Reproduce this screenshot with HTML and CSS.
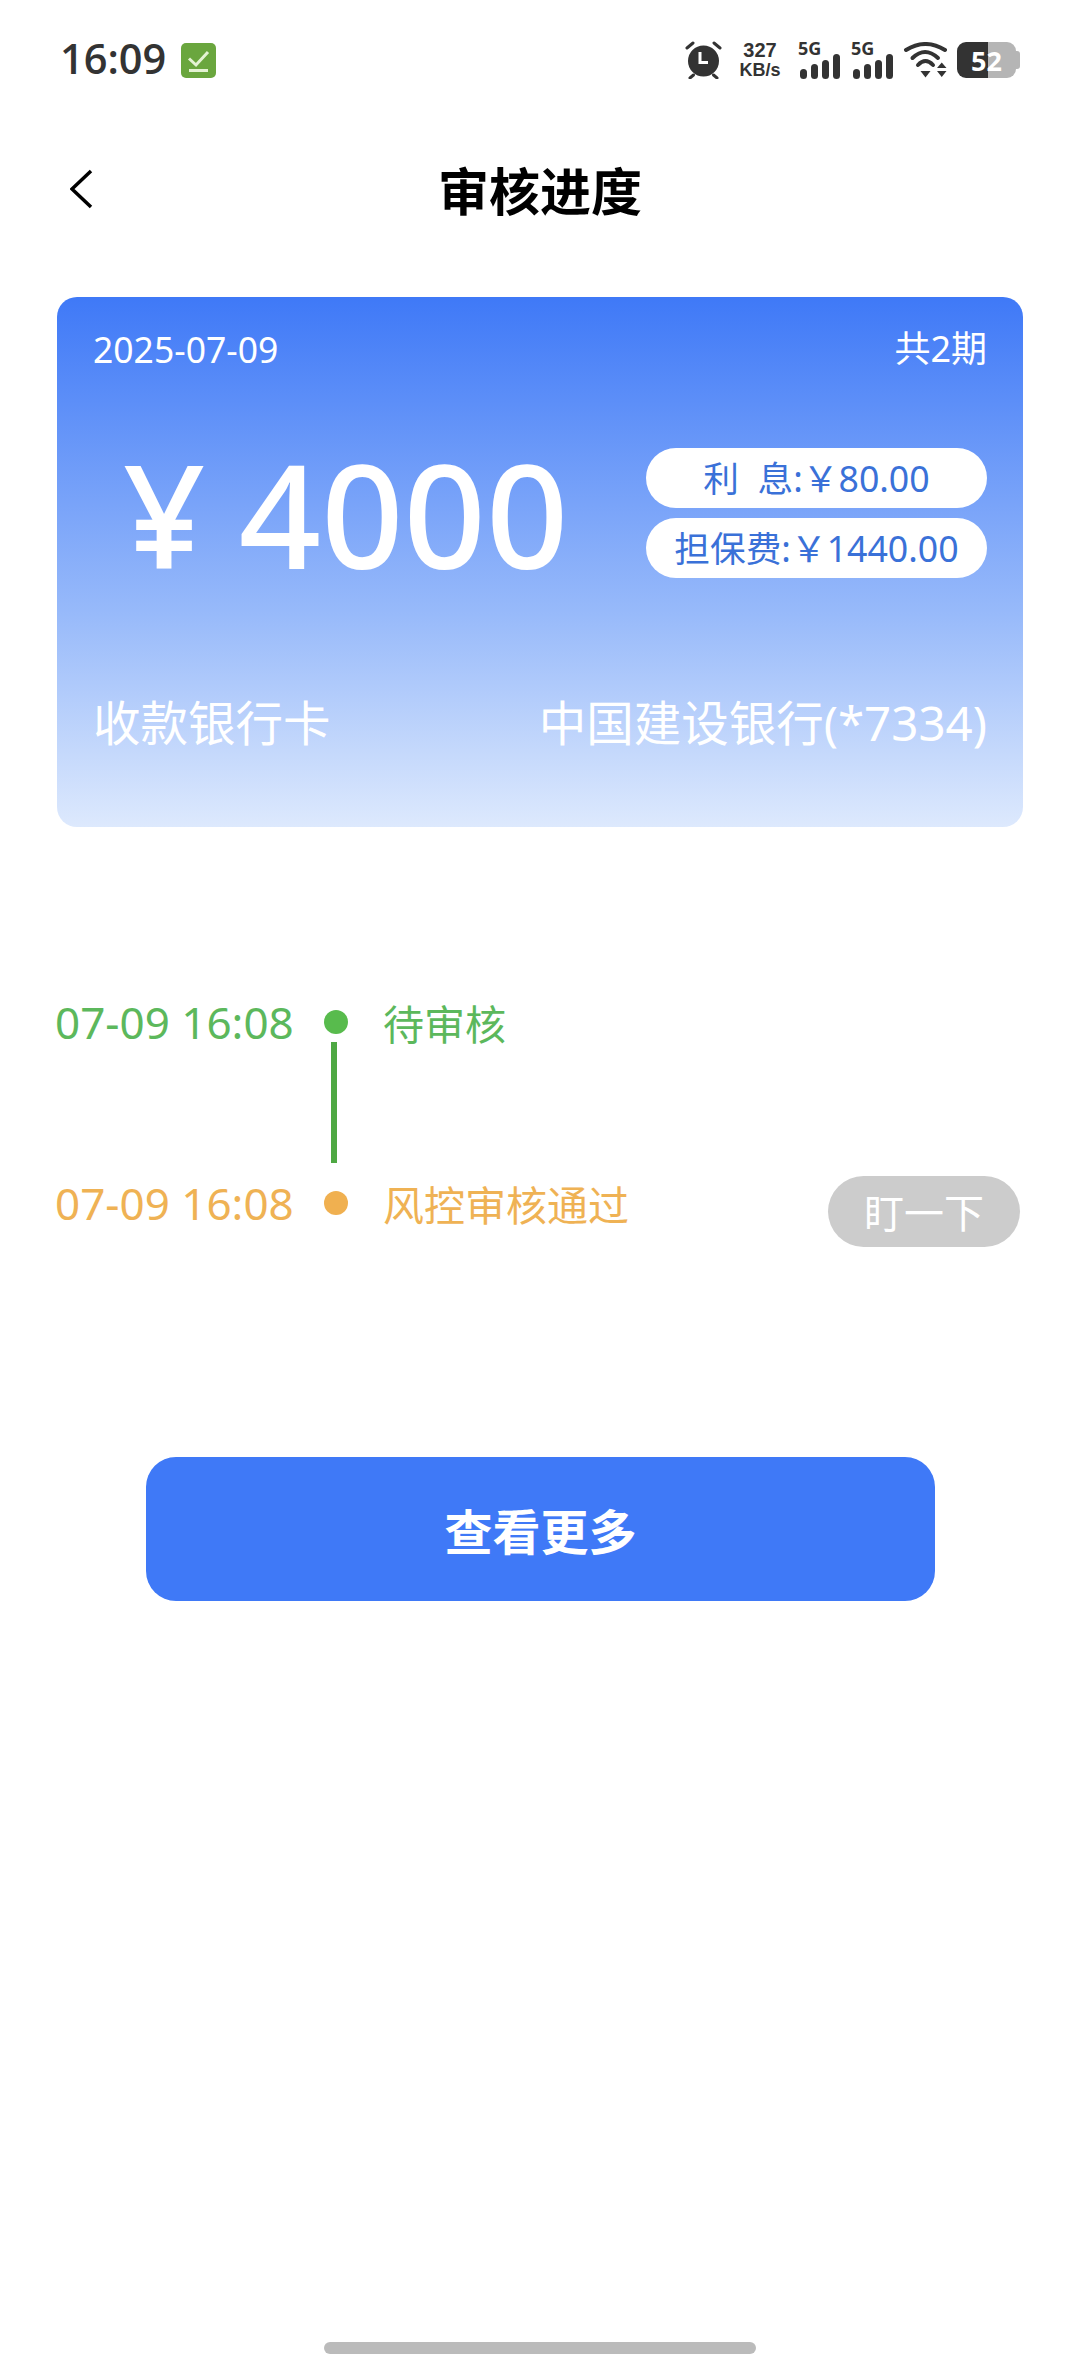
FILE: index.html
```html
<!DOCTYPE html>
<html lang="zh-CN">
  <head>
    <meta charset="UTF-8" />
    <meta name="viewport" content="width=device-width, initial-scale=1.0" />
    <title>审核进度</title>
    <link rel="stylesheet" href="styles.css">
  </head>
  <body>
    <div class="status-bar">
      <div class="status-left">
        <span class="clock">16:09</span>
        <svg class="task-icon" viewBox="0 0 35 35">
          <rect width="35" height="35" rx="5" fill="#6aa63e" />
          <path d="M8 15.500l7 6.500L27 9" fill="none" stroke="#e4f3d3" stroke-width="3" />
          <path d="M8 27.500h19" stroke="#e4f3d3" stroke-width="3" />
        </svg>
      </div>
      <div class="status-right">
        <svg class="alarm" viewBox="0 0 38 38">
          <circle cx="19.500" cy="20" r="15.500" fill="#333" />
          <path d="M16 11v10.500h8" fill="none" stroke="#fff" stroke-width="3" />
          <path d="M3 7l6-5M30 2l6 5M6 37l3.500-3M33 37l-3.500-3" stroke="#333" stroke-width="3" stroke-linecap="round" />
        </svg>
        <div class="speed">
          <span class="speed-num">327</span>
          <span class="speed-unit">KB/s</span>
        </div>
        <div class="signal">
          <span class="signal-label">5G</span>
          <svg class="bars" viewBox="0 0 40 25">
            <rect x="0" y="15" width="7" height="10" rx="3.500" fill="#333" />
            <rect x="11" y="10" width="7" height="15" rx="3.500" fill="#333" />
            <rect x="22" y="6" width="7" height="19" rx="3.500" fill="#333" />
            <rect x="33" y="0" width="7" height="25" rx="3.500" fill="#333" />
          </svg>
        </div>
        <div class="signal signal-last">
          <span class="signal-label">5G</span>
          <svg class="bars" viewBox="0 0 40 25">
            <rect x="0" y="15" width="7" height="10" rx="3.500" fill="#333" />
            <rect x="11" y="10" width="7" height="15" rx="3.500" fill="#333" />
            <rect x="22" y="6" width="7" height="19" rx="3.500" fill="#333" />
            <rect x="33" y="0" width="7" height="25" rx="3.500" fill="#333" />
          </svg>
        </div>
        <svg class="wifi" viewBox="0 0 44 36">
          <path d="M3 8Q22.500 -4 42 8" fill="none" stroke="#333" stroke-width="4" stroke-linecap="round" />
          <path d="M9.500 16Q22 4 35 16" fill="none" stroke="#333" stroke-width="4" stroke-linecap="round" />
          <path d="M15 23Q22.500 15 30 23" fill="none" stroke="#333" stroke-width="4" stroke-linecap="round" />
          <path d="M17.500 29h10l-5 6.500z" fill="#333" />
          <path d="M34 26h9.500l-4.750-5.500zM34 29h9.500l-4.750 6z" fill="#333" />
        </svg>
        <div class="battery">
          <span class="battery-level">52</span>
          <span class="battery-tip"></span>
        </div>
      </div>
    </div>

    <div class="nav">
      <svg class="back" viewBox="0 0 24 40">
        <path d="M21 2L2 20l19 18" fill="none" stroke="#000" stroke-width="3.500" />
      </svg>
      <h1 class="nav-title">审核进度</h1>
    </div>

    <div class="card">
      <div class="card-top">
        <span class="card-date">2025-07-09</span>
        <span>共2期</span>
      </div>
      <div class="card-mid">
        <div class="amount">¥ 4000</div>
        <div class="fees">
          <div class="fee">利&nbsp;&nbsp;息:￥80.00</div>
          <div class="fee">担保费:￥1440.00</div>
        </div>
      </div>
      <div class="card-bottom">
        <span>收款银行卡</span>
        <span>中国建设银行(*7334)</span>
      </div>
    </div>

    <div class="timeline">
      <div class="step step-green">
        <span class="step-time">07-09 16:08</span>
        <span class="dot"></span>
        <span class="step-text">待审核</span>
      </div>
      <div class="connector"></div>
      <div class="step step-orange">
        <span class="step-time">07-09 16:08</span>
        <span class="dot"></span>
        <span class="step-text">风控审核通过</span>
        <span class="nudge">盯一下</span>
      </div>
    </div>

    <button class="more">查看更多</button>

    <div class="home-bar"></div>
  </body>
</html>
```

FILE: styles.css
```css
* {
  box-sizing: border-box;
  padding: 0;
  margin: 0;
}
body {
  width: 1080px;
  height: 2376px;
  background-color: white;
  font-family: "Noto Sans", "Noto Sans CJK SC", sans-serif;
  overflow: hidden;
}

/* status bar */
.status-bar {
  height: 120px;
  display: flex;
  justify-content: space-between;
  align-items: center;
  padding: 0 60px 0 60px;
}
.status-left {
  display: flex;
  align-items: center;
  gap: 15px;
}
.clock {
  font-family: "Open Sans", sans-serif;
  font-size: 41.500px;
  font-weight: 600;
  color: #333;
  line-height: 1;
  margin-top: -2px;
}
.task-icon {
  width: 35px;
  height: 35px;
}
.status-right {
  display: flex;
  align-items: center;
}
.alarm {
  width: 38px;
  height: 38px;
  margin-right: 17px;
}
.speed {
  width: 42px;
  display: flex;
  flex-direction: column;
  align-items: center;
  color: #333;
  font-family: "Liberation Sans", sans-serif;
  font-weight: 700;
  margin-right: 19px;
}
.speed-num {
  font-size: 20px;
  line-height: 20px;
}
.speed-unit {
  font-size: 18px;
  line-height: 20px;
}
.signal {
  width: 40px;
  height: 38px;
  display: flex;
  flex-direction: column;
  margin-right: 13px;
}
.signal-last {
  margin-right: 10px;
}
.signal-label {
  font-size: 18px;
  font-weight: 700;
  color: #333;
  line-height: 14px;
  margin-left: -2px;
}
.bars {
  width: 40px;
  height: 25px;
  margin-top: -1px;
}
.wifi {
  width: 44px;
  height: 36px;
  margin-right: 10px;
}
.battery {
  width: 59px;
  height: 36px;
  margin-right: 4px;
  border-radius: 9px;
  background: linear-gradient(to right, #333 52.500%, #b5b5b5 52.500%);
  display: flex;
  align-items: center;
  justify-content: center;
  position: relative;
}
.battery-level {
  font-size: 27px;
  font-weight: 700;
  color: white;
  line-height: 1;
}
.battery-tip {
  position: absolute;
  right: -4px;
  top: 9px;
  width: 4px;
  height: 18px;
  background-color: #b5b5b5;
  border-radius: 0 3px 3px 0;
}

/* nav */
.nav {
  height: 144px;
  display: flex;
  align-items: center;
  justify-content: center;
  position: relative;
}
.back {
  position: absolute;
  left: 70px;
  top: 49px;
  width: 24px;
  height: 40px;
}
.nav-title {
  font-family: "Noto Sans CJK SC", sans-serif;
  font-size: 51px;
  font-weight: 700;
  color: #000;
  margin-top: -6px;
}

/* card */
.card {
  width: 966px;
  height: 530px;
  margin: 33px 0 0 57px;
  padding: 26px 36px 0 36px;
  border-radius: 20px;
  background: linear-gradient(to bottom, #3f79f7 0%, #98bafa 60%, #dde9fd 100%);
  color: white;
  display: flex;
  flex-direction: column;
}
.card-top {
  display: flex;
  justify-content: space-between;
  font-size: 36px;
  line-height: 52px;
}
.card-date {
  font-size: 35.500px;
}
.card-mid {
  height: 130px;
  margin-top: 73px;
  display: flex;
  justify-content: space-between;
  align-items: center;
}
.amount {
  font-size: 144px;
  font-weight: 550;
  line-height: 130px;
  padding-left: 30px;
  word-spacing: -4px;
  white-space: nowrap;
}
.fees {
  display: flex;
  flex-direction: column;
  gap: 10px;
}
.fee {
  width: 341px;
  height: 60px;
  border-radius: 30px;
  background-color: white;
  color: #3a71d8;
  font-size: 35.700px;
  line-height: 60px;
  text-align: center;
  white-space: nowrap;
}
.card-bottom {
  display: flex;
  justify-content: space-between;
  margin-top: 112px;
  font-size: 47.500px;
  line-height: 66px;
}

/* timeline */
.timeline {
  margin: 164px 60px 0 55px;
}
.step {
  display: flex;
  align-items: center;
  height: 62px;
}
.step-time {
  width: 269px;
  font-size: 44px;
  white-space: nowrap;
}
.dot {
  width: 24px;
  height: 24px;
  border-radius: 50%;
  margin-right: 35px;
}
.step-green {
  color: #5cb85c;
}
.step-green .dot {
  background-color: #58bb4d;
}
.step-orange {
  color: #efb254;
}
.step-orange .dot {
  background-color: #f0b050;
}
.step-text {
  font-family: "Noto Sans CJK SC", sans-serif;
  font-size: 41px;
}
.connector {
  width: 6px;
  height: 121px;
  margin: -11px 0 9px 276px;
  background-color: #4ea843;
}
.nudge {
  margin-left: auto;
  width: 192px;
  height: 71px;
  border-radius: 36px;
  background-color: #cccccc;
  color: white;
  font-family: "Noto Sans CJK SC", sans-serif;
  font-size: 40px;
  line-height: 71px;
  text-align: center;
  transform: translateY(8px);
}

/* button */
.more {
  display: block;
  width: 789px;
  height: 144px;
  margin: 223px 0 0 146px;
  border: none;
  border-radius: 30px;
  background-color: #3f79f7;
  color: white;
  font-family: "Noto Sans CJK SC", sans-serif;
  font-size: 48px;
  font-weight: 700;
}

.home-bar {
  width: 432px;
  height: 12px;
  margin: 741px 0 0 324px;
  border-radius: 6px;
  background-color: #bbbbbb;
}
```
